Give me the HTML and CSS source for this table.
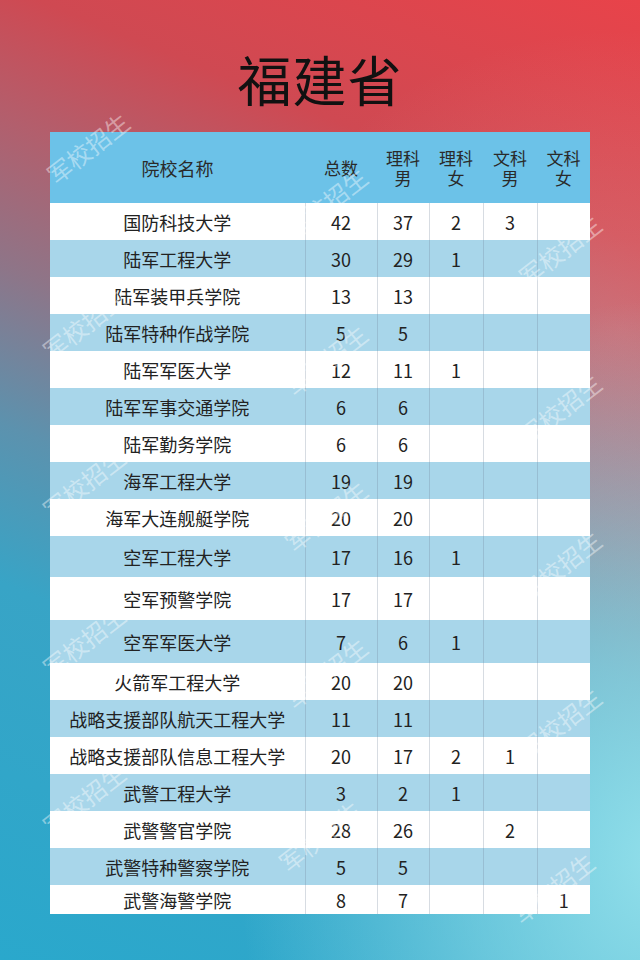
FILE: index.html
```html
<!DOCTYPE html>
<html lang="zh-CN">
<head>
<meta charset="utf-8">
<title>福建省</title>
<link rel="stylesheet" href="styles.css">
</head>
<body>
<div class="page">
  <h1 class="title">福建省</h1>
  <table class="plan">
    <colgroup>
      <col class="c-name"><col class="c-total"><col class="c-a"><col class="c-b"><col class="c-c"><col class="c-d">
    </colgroup>
    <thead>
      <tr>
        <th>院校名称</th>
        <th>总数</th>
        <th><span class="hl">理科</span><span class="hl">男</span></th>
        <th><span class="hl">理科</span><span class="hl">女</span></th>
        <th><span class="hl">文科</span><span class="hl">男</span></th>
        <th><span class="hl">文科</span><span class="hl">女</span></th>
      </tr>
    </thead>
    <tbody>
      <tr><td>国防科技大学</td><td>42</td><td>37</td><td>2</td><td>3</td><td></td></tr>
      <tr class="alt"><td>陆军工程大学</td><td>30</td><td>29</td><td>1</td><td></td><td></td></tr>
      <tr><td>陆军装甲兵学院</td><td>13</td><td>13</td><td></td><td></td><td></td></tr>
      <tr class="alt"><td>陆军特种作战学院</td><td>5</td><td>5</td><td></td><td></td><td></td></tr>
      <tr><td>陆军军医大学</td><td>12</td><td>11</td><td>1</td><td></td><td></td></tr>
      <tr class="alt"><td>陆军军事交通学院</td><td>6</td><td>6</td><td></td><td></td><td></td></tr>
      <tr><td>陆军勤务学院</td><td>6</td><td>6</td><td></td><td></td><td></td></tr>
      <tr class="alt"><td>海军工程大学</td><td>19</td><td>19</td><td></td><td></td><td></td></tr>
      <tr><td>海军大连舰艇学院</td><td>20</td><td>20</td><td></td><td></td><td></td></tr>
      <tr class="alt tall"><td>空军工程大学</td><td>17</td><td>16</td><td>1</td><td></td><td></td></tr>
      <tr class="taller"><td>空军预警学院</td><td>17</td><td>17</td><td></td><td></td><td></td></tr>
      <tr class="alt taller"><td>空军军医大学</td><td>7</td><td>6</td><td>1</td><td></td><td></td></tr>
      <tr><td>火箭军工程大学</td><td>20</td><td>20</td><td></td><td></td><td></td></tr>
      <tr class="alt"><td>战略支援部队航天工程大学</td><td>11</td><td>11</td><td></td><td></td><td></td></tr>
      <tr><td>战略支援部队信息工程大学</td><td>20</td><td>17</td><td>2</td><td>1</td><td></td></tr>
      <tr class="alt"><td>武警工程大学</td><td>3</td><td>2</td><td>1</td><td></td><td></td></tr>
      <tr><td>武警警官学院</td><td>28</td><td>26</td><td></td><td>2</td><td></td></tr>
      <tr class="alt"><td>武警特种警察学院</td><td>5</td><td>5</td><td></td><td></td><td></td></tr>
      <tr class="short"><td>武警海警学院</td><td>8</td><td>7</td><td></td><td></td><td>1</td></tr>
    </tbody>
  </table>

  <div class="marks" aria-hidden="true">
    <span class="wm wm-l1">军校招生</span>
    <span class="wm wm-l2">军校招生</span>
    <span class="wm wm-l3">军校招生</span>
    <span class="wm wm-l4">军校招生</span>
    <span class="wm wm-l5">军校招生</span>
    <span class="wm wm-m1">军校招生</span>
    <span class="wm wm-m2">军校招生</span>
    <span class="wm wm-m3">军校招生</span>
    <span class="wm wm-m4">军校招生</span>
    <span class="wm wm-m5">军校招生</span>
    <span class="wm wm-r1">军校招生</span>
    <span class="wm wm-r2">军校招生</span>
    <span class="wm wm-r3">军校招生</span>
    <span class="wm wm-r4">军校招生</span>
    <span class="wm wm-r5">军校招生</span>
  </div>
</div>
</body>
</html>
```

FILE: styles.css
```css
* { box-sizing: border-box; }

html, body {
  margin: 0;
  padding: 0;
}

body {
  font-family: "Noto Sans CJK SC", "Noto Sans", sans-serif;
  color: #222;
}

.page {
  position: relative;
  width: 640px;
  height: 960px;
  overflow: hidden;
  display: flex;
  flex-direction: column;
  align-items: center;
  background:
    radial-gradient(ellipse 420px 560px at 660px 860px, rgba(150, 226, 236, 0.95) 0%, rgba(150, 226, 236, 0.55) 45%, rgba(150, 226, 236, 0) 100%),
    radial-gradient(ellipse 360px 300px at 620px 330px, rgba(240, 170, 170, 0.3) 0%, rgba(240, 170, 170, 0) 100%),
    linear-gradient(202deg, #e8434a 0%, #cf4952 20%, #b25f6d 31%, #8e7588 43%, #5c92ae 56%, #38a4c6 69%, #2aa8cc 100%);
}

.title {
  margin: 40px 0 0;
  height: 92px;
  font-size: 54px;
  line-height: 78px;
  font-weight: 400;
  color: #111;
  letter-spacing: 1px;
}

.plan {
  width: 540px;
  border-collapse: collapse;
  table-layout: fixed;
  background: #fff;
  font-size: 18px;
}

.c-name { width: 255px; }
.c-total { width: 72px; }
.c-a { width: 52px; }
.c-b { width: 54px; }
.c-c { width: 54px; }
.c-d { width: 53px; }

.plan th {
  height: 71px;
  padding: 0;
  background: #6cc2e8;
  font-weight: 400;
  font-size: 17px;
  line-height: 20px;
  color: #2a2a2a;
  text-align: center;
  vertical-align: middle;
}

.plan th:first-child { font-size: 18px; }

.hl {
  display: block;
  height: 20px;
  line-height: 20px;
}

.plan td {
  height: 37px;
  padding: 0;
  text-align: center;
  vertical-align: middle;
  line-height: 20px;
  white-space: nowrap;
  border-left: 1px solid rgba(110, 130, 150, 0.28);
}

.plan td:first-child { border-left: none; }

.plan tr.alt td { background: #a8d6ea; }
.plan tr.tall td { height: 41px; }
.plan tr.taller td { height: 43px; }
.plan tr.short td { height: 29px; }

.marks {
  position: absolute;
  inset: 0;
  pointer-events: none;
}

.wm {
  position: absolute;
  font-size: 24px;
  line-height: 24px;
  color: rgba(255, 255, 255, 0.42);
  white-space: nowrap;
  transform: translate(-50%, -50%) rotate(-38deg);
}

.wm-l1 { left: 88px; top: 148px; }
.wm-l2 { left: 84px; top: 324px; }
.wm-l3 { left: 84px; top: 483px; }
.wm-l4 { left: 84px; top: 641px; }
.wm-l5 { left: 84px; top: 799px; }

.wm-m1 { left: 326px; top: 203px; }
.wm-m2 { left: 326px; top: 360px; }
.wm-m3 { left: 326px; top: 516px; }
.wm-m4 { left: 326px; top: 673px; }
.wm-m5 { left: 320px; top: 836px; }

.wm-r1 { left: 560px; top: 250px; }
.wm-r2 { left: 560px; top: 409px; }
.wm-r3 { left: 560px; top: 566px; }
.wm-r4 { left: 560px; top: 723px; }
.wm-r5 { left: 553px; top: 888px; }
```
